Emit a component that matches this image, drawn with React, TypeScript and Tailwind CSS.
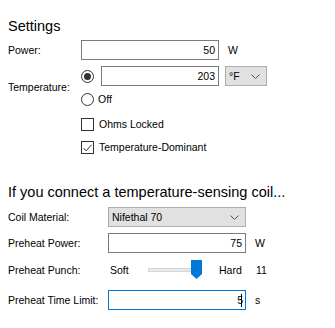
import React from "react";

function TextBox({ value, w, focused }: { value: string; w: string; focused?: boolean }) {
  return (
    <div
      className={`flex h-[20px] ${w} items-center justify-end border bg-white pr-[3px] ${
        focused ? "border-[#0078d7]" : "border-[#7a7a7a]"
      }`}
    >
      <span>{value}</span>
      {focused && <span className="-ml-[2px] h-[13px] w-px bg-black" />}
    </div>
  );
}

function Chevron() {
  return (
    <svg width="9" height="5" viewBox="0 0 9 5" fill="none">
      <path d="M0.5 0.5 L4.5 4.5 L8.5 0.5" stroke="#505050" strokeWidth="1" />
    </svg>
  );
}

function Combo({ label, w }: { label: string; w: string }) {
  return (
    <div className={`flex h-[20px] ${w} items-center justify-between border border-[#adadad] bg-[#e1e1e1] pl-[3px] pr-[6px]`}>
      <span>{label}</span>
      <Chevron />
    </div>
  );
}

function Radio({ checked }: { checked?: boolean }) {
  return (
    <div className="flex h-[13px] w-[13px] items-center justify-center rounded-full border border-[#333]">
      {checked && <div className="h-[7px] w-[7px] rounded-full bg-[#333]" />}
    </div>
  );
}

function Check({ checked }: { checked?: boolean }) {
  return (
    <div className="flex h-[13px] w-[13px] items-center justify-center border border-[#333] bg-white">
      {checked && (
        <svg width="9" height="8" viewBox="0 0 9 8" fill="none">
          <path d="M0.5 4 L3.2 6.8 L8.5 0.8" stroke="#333" strokeWidth="1" />
        </svg>
      )}
    </div>
  );
}

export default function App() {
  return (
    <div className="h-[328px] w-[335px] overflow-hidden bg-white pl-[8px] text-[10.5px] leading-[13px] text-black [font-family:'Liberation_Sans',Arial,sans-serif]">
      <div className="mt-[17px] h-[18px] text-[14.5px] leading-[18px]">Settings</div>

      <div className="mt-[5px] flex h-[20px] items-center">
        <span className="w-[73px]">Power:</span>
        <TextBox value="50" w="w-[138px]" />
        <span className="ml-[9px]">W</span>
      </div>

      <div className="mt-[6px] flex items-center">
        <span className="w-[73px] pt-[2px]">Temperature:</span>
        <div className="flex flex-col">
          <div className="flex h-[20px] items-center">
            <Radio checked />
            <div className="ml-[7px]">
              <TextBox value="203" w="w-[118px]" />
            </div>
            <div className="ml-[6px]">
              <Combo label="°F" w="w-[42px]" />
            </div>
          </div>
          <div className="mt-[7px] flex h-[13px] items-center">
            <Radio />
            <span className="ml-[4px]">Off</span>
          </div>
        </div>
      </div>

      <div className="ml-[73px] mt-[12px] flex h-[13px] items-center">
        <Check />
        <span className="ml-[5px]">Ohms Locked</span>
      </div>
      <div className="ml-[73px] mt-[10px] flex h-[13px] items-center">
        <Check checked />
        <span className="ml-[5px]">Temperature-Dominant</span>
      </div>

      <div className="mt-[29px] h-[18px] text-[14.5px] leading-[18px]">If you connect a temperature-sensing coil...</div>

      <div className="mt-[6px] flex h-[20px] items-center">
        <span className="w-[100px]">Coil Material:</span>
        <Combo label="Nifethal 70" w="w-[138px]" />
      </div>

      <div className="mt-[6px] flex h-[20px] items-center">
        <span className="w-[100px]">Preheat Power:</span>
        <TextBox value="75" w="w-[138px]" />
        <span className="ml-[9px]">W</span>
      </div>

      <div className="mt-[6px] flex h-[22px] items-center">
        <span className="w-[100px]">Preheat Punch:</span>
        <span className="ml-[2px] w-[38px]">Soft</span>
        <div className="relative flex h-[22px] w-[60px] items-center">
          <div className="h-[4px] w-[52px] border border-[#d6d6d6] bg-[#e7eaea]" />
          <svg className="absolute left-[43px] top-[1px]" width="11" height="19" viewBox="0 0 11 19">
            <path d="M0 0 H11 V14 L5.5 19 L0 14 Z" fill="#0078d7" />
          </svg>
        </div>
        <span className="ml-[11px] w-[37px]">Hard</span>
        <span>11</span>
      </div>

      <div className="mt-[9px] flex h-[20px] items-center">
        <span className="w-[100px]">Preheat Time Limit:</span>
        <TextBox value="5" w="w-[138px]" focused />
        <span className="ml-[9px]">s</span>
      </div>
    </div>
  );
}
